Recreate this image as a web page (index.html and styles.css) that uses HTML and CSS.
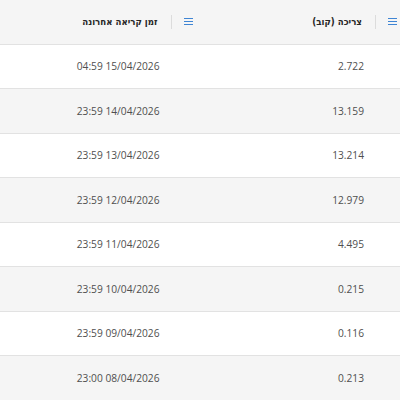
FILE: index.html
```html
<!DOCTYPE html>
<html lang="he" dir="rtl">
<head>
    <meta charset="UTF-8">
    <title>קריאות מונה</title>
    <link rel="stylesheet" href="styles.css">
</head>
<body>
    <div class="grid">
        <div class="grid-header">
            <div class="header-cell">
                <span class="menu-icon">
                    <svg width="9" height="7" viewBox="0 0 9 7"><path d="M0 0.5h9M0 3.5h9M0 6.5h9" stroke="currentColor" stroke-width="1"/></svg>
                </span>
                <span class="resize-line"></span>
                <span class="header-text">צריכה (קוב)</span>
            </div>
            <div class="header-cell">
                <span class="menu-icon">
                    <svg width="9" height="7" viewBox="0 0 9 7"><path d="M0 0.5h9M0 3.5h9M0 6.5h9" stroke="currentColor" stroke-width="1"/></svg>
                </span>
                <span class="resize-line"></span>
                <span class="header-text">זמן קריאה אחרונה</span>
            </div>
        </div>

        <div class="grid-row">
            <div class="cell">2.722</div>
            <div class="cell">15/04/2026 04:59</div>
        </div>
        <div class="grid-row">
            <div class="cell">13.159</div>
            <div class="cell">14/04/2026 23:59</div>
        </div>
        <div class="grid-row">
            <div class="cell">13.214</div>
            <div class="cell">13/04/2026 23:59</div>
        </div>
        <div class="grid-row">
            <div class="cell">12.979</div>
            <div class="cell">12/04/2026 23:59</div>
        </div>
        <div class="grid-row">
            <div class="cell">4.495</div>
            <div class="cell">11/04/2026 23:59</div>
        </div>
        <div class="grid-row">
            <div class="cell">0.215</div>
            <div class="cell">10/04/2026 23:59</div>
        </div>
        <div class="grid-row">
            <div class="cell">0.116</div>
            <div class="cell">09/04/2026 23:59</div>
        </div>
        <div class="grid-row">
            <div class="cell">0.213</div>
            <div class="cell">08/04/2026 23:00</div>
        </div>
    </div>
</body>
</html>
```

FILE: styles.css
```css
:root {
    --accent: #3f85d4;
    --text: #4f4f4f;
    --heading: #262626;
    --line: #e2e2e2;
    --stripe: #f5f5f5;
}

body {
    margin: 0;
    background: white;
    font-family: 'Open Sans', 'Noto Sans', 'DejaVu Sans', sans-serif;
    overflow: hidden;
}

.grid {
    width: 409px;
}

.grid-header,
.grid-row {
    display: flex;
    box-sizing: border-box;
    height: 44.5px;
    border-bottom: 1px solid var(--line);
}

.grid-header {
    background: var(--stripe);
}

.grid-row:nth-child(odd) {
    background: var(--stripe);
}

.header-cell,
.cell {
    width: 204.5px;
    flex: none;
    display: flex;
    align-items: center;
    box-sizing: border-box;
}

.header-cell {
    padding-right: 3px;
}

.menu-icon {
    display: flex;
    color: var(--accent);
}

.resize-line {
    width: 1px;
    height: 14px;
    background: #dcdcdc;
    margin: 0 12px 0 13px;
}

.header-text {
    font-family: 'DejaVu Sans Condensed', 'DejaVu Sans', sans-serif;
    font-stretch: condensed;
    font-size: 9.6px;
    font-weight: 700;
    color: var(--heading);
}

.cell {
    padding-right: 36px;
    font-size: 10.2px;
    color: var(--text);
}
```
